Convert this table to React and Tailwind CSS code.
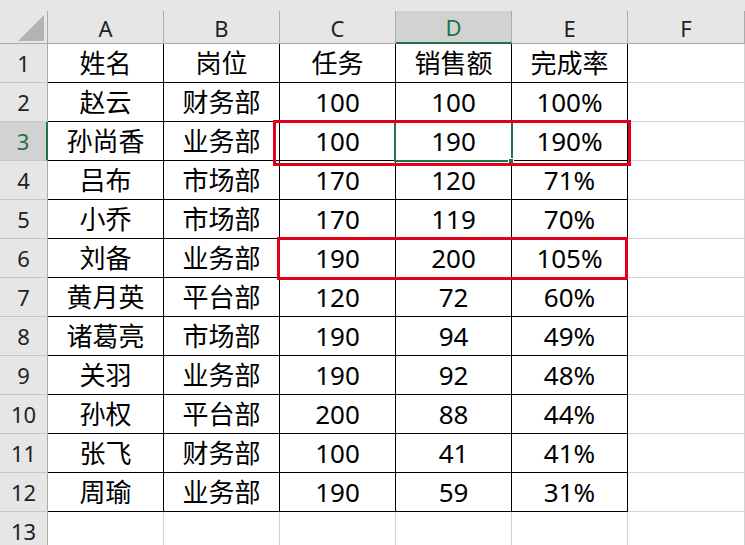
const rows = [
  ["姓名", "岗位", "任务", "销售额", "完成率"],
  ["赵云", "财务部", "100", "100", "100%"],
  ["孙尚香", "业务部", "100", "190", "190%"],
  ["吕布", "市场部", "170", "120", "71%"],
  ["小乔", "市场部", "170", "119", "70%"],
  ["刘备", "业务部", "190", "200", "105%"],
  ["黄月英", "平台部", "120", "72", "60%"],
  ["诸葛亮", "市场部", "190", "94", "49%"],
  ["关羽", "业务部", "190", "92", "48%"],
  ["孙权", "平台部", "200", "88", "44%"],
  ["张飞", "财务部", "100", "41", "41%"],
  ["周瑜", "业务部", "190", "59", "31%"],
];

const cols = ["A", "B", "C", "D", "E", "F"];
const font = { fontFamily: '"Noto Sans", "Noto Sans CJK SC", sans-serif' };

function RowHeader({ n, active }) {
  return (
    <div
      className={
        "h-[39px] flex items-center justify-center text-[22px] border-b border-[#c6c6c6] " +
        (active
          ? "bg-[#d2d2d2] text-[#217346] border-r-2 border-r-[#217346]"
          : "bg-[#e6e6e6] text-[#222] border-r border-r-[#ababab]")
      }
    >
      {n}
    </div>
  );
}

export default function App() {
  return (
    <div className="relative w-[745px] h-[545px] overflow-hidden bg-white text-black" style={font}>
      <div className="h-[11px] bg-[#e6e6e6]" />
      <div className="grid grid-cols-[48px_116px_116px_116px_116px_116px_117px]">
        {/* column headers */}
        <div className="relative h-[33px] bg-[#e6e6e6] border-r border-b border-[#ababab]">
          <div className="absolute right-[3px] bottom-[2px] w-0 h-0 border-l-[26px] border-l-transparent border-b-[26px] border-b-[#b4b4b4]" />
        </div>
        {cols.map((c) => (
          <div
            key={c}
            className={
              "h-[33px] flex items-center justify-center pt-[2px] text-[22px] border-r border-[#ababab] " +
              (c === "D"
                ? "bg-[#d2d2d2] text-[#217346] border-b-2 border-b-[#217346]"
                : "bg-[#e6e6e6] text-[#222] border-b border-b-[#ababab]")
            }
          >
            {c}
          </div>
        ))}

        {rows.map((r, i) => (
          <div key={i} className="contents">
            <RowHeader n={i + 1} active={i === 2} />
            {r.map((v, j) => (
              <div
                key={j}
                className="h-[39px] flex items-center justify-center text-[26px] border-r border-b border-black"
              >
                {v}
              </div>
            ))}
            <div className="h-[39px] border-r border-b border-[#d4d4d4]" />
          </div>
        ))}

        <RowHeader n={13} />
        {cols.map((c) => (
          <div key={c} className="h-[39px] border-r border-b border-[#d4d4d4]" />
        ))}
      </div>

      {/* active cell D3 */}
      <div className="absolute left-[394px] top-[121px] w-[119px] h-[41px] border-2 border-[#217346]" />
      <div className="absolute left-[508px] top-[158px] w-[6px] h-[6px] bg-[#217346] border border-white" />

      {/* red highlight boxes */}
      <div className="absolute left-[273px] top-[120px] w-[358px] h-[46px] border-[3px] border-[#e2001a]" />
      <div className="absolute left-[277px] top-[237px] w-[351px] h-[43px] border-[3px] border-[#e2001a]" />
    </div>
  );
}
